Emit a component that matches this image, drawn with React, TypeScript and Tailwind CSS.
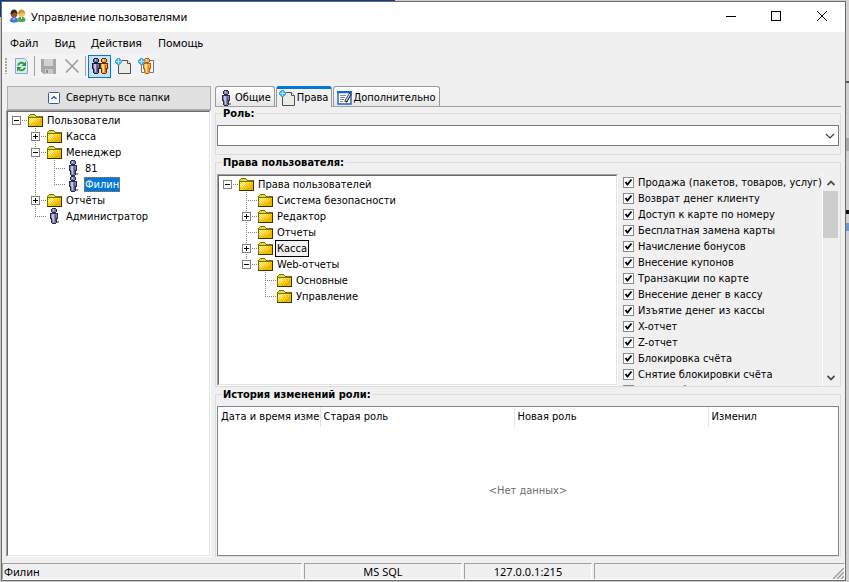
import type { ReactNode } from "react";

type NodeKind = "folder" | "user";

interface TreeItem {
  label: string;
  kind: NodeKind;
  toggle?: "plus" | "minus";
  selected?: "active" | "inactive";
  children?: TreeItem[];
}

const userTree: TreeItem[] = [
  {
    label: "Пользователи",
    kind: "folder",
    toggle: "minus",
    children: [
      { label: "Касса", kind: "folder", toggle: "plus" },
      {
        label: "Менеджер",
        kind: "folder",
        toggle: "minus",
        children: [
          { label: "81", kind: "user" },
          { label: "Филин", kind: "user", selected: "active" },
        ],
      },
      { label: "Отчёты", kind: "folder", toggle: "plus" },
      { label: "Администратор", kind: "user" },
    ],
  },
];

const rightsTree: TreeItem[] = [
  {
    label: "Права пользователей",
    kind: "folder",
    toggle: "minus",
    children: [
      { label: "Система безопасности", kind: "folder" },
      { label: "Редактор", kind: "folder", toggle: "plus" },
      { label: "Отчеты", kind: "folder" },
      { label: "Касса", kind: "folder", toggle: "plus", selected: "inactive" },
      {
        label: "Web-отчеты",
        kind: "folder",
        toggle: "minus",
        children: [
          { label: "Основные", kind: "folder" },
          { label: "Управление", kind: "folder" },
        ],
      },
    ],
  },
];

const permissions = [
  "Продажа (пакетов, товаров, услуг)",
  "Возврат денег клиенту",
  "Доступ к карте по номеру",
  "Бесплатная замена карты",
  "Начисление бонусов",
  "Внесение купонов",
  "Транзакции по карте",
  "Внесение денег в кассу",
  "Изъятие денег из кассы",
  "X-отчет",
  "Z-отчет",
  "Блокировка счёта",
  "Снятие блокировки счёта",
  "Отмена блокировки",
];

function FolderIcon() {
  return (
    <svg className="h-4 w-4 shrink-0" viewBox="0 0 16 16" shapeRendering="crispEdges" aria-hidden="true">
      <path d="M0 4h1V3h1V2h5v1h1v1h7v11H0z" fill="#7a7000" />
      <path d="M2 3h5v1h1v1H1V4h1z" fill="#e8d838" />
      <path d="M1 6h13v8H1z" fill="#eeb400" />
      <path d="M1 6h10v1h-1v1H9v1H8v1H6v1H4v1H1z" fill="#fcd428" />
      <g stroke="#ffdc3c" strokeDasharray="1 1">
        <path d="M11 6.500h3M11 7.500h2M9 8.500h4M8 9.500h4M7 10.500h4M5 11.500h4M2 12.500h5M1 13.500h3" />
      </g>
      <g stroke="#fff6a0" strokeDasharray="1 1">
        <path d="M1 6.500h9M2 7.500h6M1 8.500h5M2 9.500h3M1 10.500h3" />
      </g>
      <path d="M0 14.500h15M14.500 5v10" stroke="#3a3200" />
    </svg>
  );
}

function PersonShape({ x, body, light, dark }: { x: number; body: string; light: string; dark: string }) {
  return (
    <g transform={`translate(${x} 0)`}>
      <path d="M3 0h4v1h1v3h-1v1h2v6H8v4H7v1H3v-1H2v-4H1V5h2V4H2V1h1z" fill={dark} />
      <path d="M3 1h4v3H3zM2 6h6v4H7v5H3v-5H2z" fill={body} />
      <path d="M4 1h1v2H4zM3 6h2v8H4v-3H3z" fill={light} />
      <path d="M6 7h1v7H6z" fill={dark} opacity=".5" />
    </g>
  );
}

function UserIcon() {
  return (
    <svg className="h-4 w-4 shrink-0" viewBox="0 0 16 16" shapeRendering="crispEdges" aria-hidden="true">
      <path d="M10 13h2v2h-2z" fill="#9a9a9a" />
      <PersonShape x={2} body="#8080b4" light="#c4c4e0" dark="#2a2a44" />
    </svg>
  );
}

function UsersPairIcon() {
  return (
    <svg className="h-4 w-4" viewBox="0 0 16 16" shapeRendering="crispEdges" aria-hidden="true">
      <PersonShape x={-1} body="#7474a8" light="#c4c4e0" dark="#1c1c30" />
      <PersonShape x={7} body="#ff9d1c" light="#ffe08a" dark="#6a2c00" />
    </svg>
  );
}

function PlusDiamond() {
  return (
    <g shapeRendering="crispEdges">
      <path d="M2 0h3v1h1v1h1v3H6v1H5v1H2V6H1V5H0V2h1V1h1z" fill="#4cacd8" />
      <path d="M3 1h1v2h2v1H4v2H3V4H1V3h2z" fill="#a8e4fa" />
    </g>
  );
}

function NewPageIcon() {
  return (
    <svg className="h-4 w-4 shrink-0" viewBox="0 0 16 16" aria-hidden="true">
      <path d="M3.500 2.500h9l3 3v10h-12z" fill="#ecece6" stroke="#505050" />
      <path d="M12.500 2.500v3h3" fill="#fff" stroke="#505050" />
      <PlusDiamond />
    </svg>
  );
}

function NewUserIcon() {
  return (
    <svg className="h-4 w-4" viewBox="0 0 16 16" aria-hidden="true">
      <path d="M3.500 2.500h12v12h-12z" fill="#f4f4f4" stroke="#777" />
      <PersonShape x={4} body="#ffac3c" light="#ffe3a0" dark="#b8601c" />
      <PlusDiamond />
    </svg>
  );
}

function RefreshIcon() {
  return (
    <svg className="h-4 w-4" viewBox="0 0 16 16" aria-hidden="true">
      <path d="M1.500 .5h9l3 3v12h-12z" fill="#dbe9fa" stroke="#8aa8d0" />
      <path d="M4 7.500C5 4.500 8 4 10 5.500" fill="none" stroke="#36a336" strokeWidth="2" />
      <path d="M12 3.500v4.500H7.500z" fill="#2b982b" />
      <path d="M11 9.500c-1 3-4 3.500-6 2" fill="none" stroke="#36a336" strokeWidth="2" />
      <path d="M3 13.500V9h4.500z" fill="#2b982b" />
    </svg>
  );
}

function SaveIcon() {
  return (
    <svg className="h-4 w-4" viewBox="0 0 16 16" shapeRendering="crispEdges" aria-hidden="true">
      <path d="M0 1h15v15H2l-2-2z" fill="#a8a8a8" />
      <path d="M3 1h9v7H3z" fill="#d2d2d2" />
      <path d="M4 11h8v5H4z" fill="#c9c9c9" />
      <path d="M5 12h2v3H5z" fill="#8d8d8d" />
    </svg>
  );
}

function DeleteIcon() {
  return (
    <svg className="h-4 w-4" viewBox="0 0 16 16" aria-hidden="true">
      <path d="M1.500 1.500l13 13M14 2L2 14.500" stroke="#9c9c9c" strokeWidth="1.600" />
    </svg>
  );
}

function NotesIcon() {
  return (
    <svg className="h-4 w-4 shrink-0" viewBox="0 0 16 16" aria-hidden="true">
      <path d="M1 2.500h13v11.500H1z" fill="#fff" stroke="#1464c8" strokeWidth="1.400" />
      <path d="M0 1h15v2H0z" fill="#1464c8" />
      <path d="M3 5.500h6M3 7.500h5M3 9.500h4M3 11.500h3" stroke="#888" />
      <path d="M13.500 3.500L8.500 12" stroke="#222" strokeWidth="3" />
      <path d="M13 4L9 11" stroke="#d8d8d8" strokeWidth="1.400" />
    </svg>
  );
}

function AppIcon() {
  return (
    <svg className="h-4 w-4" viewBox="0 0 16 16" aria-hidden="true">
      <path d="M0 12c0-3 2-4 4-4s4 1 4 4c0 2-8 2-8 0z" fill="#3f74d8" />
      <path d="M7.500 11.500c0-3 2-4 4-4s4 1 4 4c0 2-8 2-8 0z" fill="#4fa84a" />
      <circle cx="4" cy="5" r="3.400" fill="#9a5230" />
      <path d="M.5 5c0-6 7-6 7 0-2-2-4-2-5 0z" fill="#33241e" />
      <circle cx="11.500" cy="4.500" r="3.400" fill="#f0c060" />
      <path d="M8 5c0-6 7-6 7 0-2-2-4-2-5 0z" fill="#cf922c" />
      <path d="M4 9v2M11.500 8v2" stroke="#fff" />
    </svg>
  );
}

function TreeCell({ shape, toggle }: { shape: "blank" | "pass" | "tee" | "end" | "root"; toggle?: "plus" | "minus" }) {
  return (
    <svg className="h-4 w-[19px] shrink-0" viewBox="0 0 19 16" shapeRendering="crispEdges" aria-hidden="true">
      <g stroke="#808080" strokeDasharray="1 1" fill="none">
        {(shape === "pass" || shape === "tee") && <path d="M8.500 0v16" />}
        {shape === "end" && <path d="M8.500 0v9" />}
        {shape !== "blank" && shape !== "pass" && <path d="M8 8.500h11" />}
      </g>
      {toggle && (
        <g>
          <rect x="4.500" y="4.500" width="8" height="8" fill="#fff" stroke="#808080" />
          <path d={toggle === "plus" ? "M6 8.500h5M8.500 6v5" : "M6 8.500h5"} stroke="#000" />
        </g>
      )}
    </svg>
  );
}

function TreeBranch({ items, guides = [] }: { items: TreeItem[]; guides?: boolean[] }) {
  return (
    <ul role={guides.length ? "group" : "tree"}>
      {items.map((item, i) => {
        const last = i === items.length - 1;
        const root = guides.length === 0;
        const mark =
          item.selected === "active"
            ? "bg-[#0078d7] text-white outline-1 outline-dotted outline-[#d0701c] -outline-offset-1"
            : item.selected === "inactive"
              ? "bg-[#f0f0f0] outline-1 outline-black"
              : "";
        return (
          <li key={item.label} role="treeitem" aria-selected={!!item.selected} aria-expanded={item.children ? true : undefined}>
            <div className="flex h-4 items-center">
              {guides.map((g, n) => (
                <TreeCell key={n} shape={g ? "pass" : "blank"} />
              ))}
              <TreeCell shape={root ? "root" : last ? "end" : "tee"} toggle={item.toggle} />
              <span className="flex items-center gap-0.5 pl-px">
                {item.kind === "folder" ? <FolderIcon /> : <UserIcon />}
                <span className={`px-px leading-[15px] whitespace-nowrap ${mark}`}>{item.label}</span>
              </span>
            </div>
            {item.children && <TreeBranch items={item.children} guides={[...guides, root ? false : !last]} />}
          </li>
        );
      })}
    </ul>
  );
}

function Sunken({ children, className }: { children: ReactNode; className: string }) {
  return (
    <div className={`border border-t-[#a0a0a0] border-r-white border-b-white border-l-[#a0a0a0] ${className}`}>
      <div className="h-full overflow-hidden border border-t-[#696969] border-r-[#e3e3e3] border-b-[#e3e3e3] border-l-[#696969] bg-white">
        {children}
      </div>
    </div>
  );
}

function Group({ title, className = "", children }: { title: string; className?: string; children: ReactNode }) {
  return (
    <fieldset className={`flex min-w-0 flex-col border border-[#dcdcdc] px-px pt-[5px] ${className}`}>
      <legend className="ml-[5px] px-px pt-px leading-3 font-bold">{title}</legend>
      {children}
    </fieldset>
  );
}

function ToolButton({ label, children, active, disabled }: { label: string; children: ReactNode; active?: boolean; disabled?: boolean }) {
  return (
    <button
      type="button"
      aria-label={label}
      disabled={disabled}
      className={`flex h-[23px] w-[23px] items-center justify-center border ${active ? "border-[#0078d7] bg-[#c9e0f5]" : "border-transparent"}`}
    >
      {children}
    </button>
  );
}

function Toolbar() {
  return (
    <div role="toolbar" className="flex h-6 w-[156px] items-center bg-[#f3f3f3] pl-[3px]">
      <div className="mr-[3px] h-4 w-0.5 bg-[repeating-linear-gradient(180deg,#a8a8a8_0_2px,transparent_2px_3px)]" />
      <ToolButton label="Обновить">
        <RefreshIcon />
      </ToolButton>
      <div className="mx-px h-5 w-px bg-[#a0a0a0]" />
      <div className="flex pl-px">
        <ToolButton label="Сохранить" disabled>
          <SaveIcon />
        </ToolButton>
        <ToolButton label="Удалить" disabled>
          <DeleteIcon />
        </ToolButton>
      </div>
      <div className="mx-0.5 h-5 w-px bg-[#a0a0a0]" />
      <ToolButton label="Пользователи" active>
        <UsersPairIcon />
      </ToolButton>
      <ToolButton label="Новая папка">
        <NewPageIcon />
      </ToolButton>
      <ToolButton label="Новый пользователь">
        <NewUserIcon />
      </ToolButton>
    </div>
  );
}

function TabButton({ label, icon, active }: { label: string; icon: ReactNode; active?: boolean }) {
  return (
    <button
      type="button"
      role="tab"
      aria-selected={!!active}
      className={`flex items-center rounded-t-[3px] border border-b-0 border-[#989898] bg-[#f0f0f0] pr-[3px] whitespace-nowrap ${
        active ? "-mb-px h-[21px] gap-0.5 border-t-[3px] border-t-[#0078d7] pl-0.5" : "h-5 bg-linear-to-b from-white to-[#e6e6e6] pt-0.5 pl-[3px]"
      }`}
    >
      {icon}
      <span>{label}</span>
    </button>
  );
}

function ScrollColumn() {
  return (
    <div className="flex w-4 shrink-0 flex-col border-l border-white bg-[#f0f0f0]">
      <button type="button" aria-label="Вверх" className="flex h-[17px] items-center justify-center">
        <svg className="h-2 w-2" viewBox="0 0 8 8" aria-hidden="true">
          <path d="M.5 6L4 2.500 7.500 6" fill="none" stroke="#505050" strokeWidth="1.800" />
        </svg>
      </button>
      <div className="flex-1">
        <div className="h-[47px] bg-[#cdcdcd]" />
      </div>
      <button type="button" aria-label="Вниз" className="flex h-[17px] items-center justify-center">
        <svg className="h-2 w-2" viewBox="0 0 8 8" aria-hidden="true">
          <path d="M.5 2L4 5.500 7.500 2" fill="none" stroke="#505050" strokeWidth="1.800" />
        </svg>
      </button>
    </div>
  );
}

function PermissionList() {
  return (
    <div className="flex w-[216px] shrink-0">
      <ul className="min-w-0 flex-1 overflow-hidden">
        {permissions.map((name) => (
          <li key={name} className="h-4">
            <label className="flex h-4 items-center gap-1 pl-px whitespace-nowrap">
              <span className="grid">
                <input
                  type="checkbox"
                  defaultChecked
                  className="peer col-start-1 row-start-1 h-[11px] w-[11px] appearance-none border border-[#8c8c8c] bg-white"
                />
                <svg className="pointer-events-none invisible col-start-1 row-start-1 h-[11px] w-[11px] peer-checked:visible" viewBox="0 0 11 11" aria-hidden="true">
                  <path d="M2.500 5l2 2.500 4-5" fill="none" stroke="#000" strokeWidth="2" />
                </svg>
              </span>
              <span className="pt-0.5">{name}</span>
            </label>
          </li>
        ))}
      </ul>
      <ScrollColumn />
    </div>
  );
}

function HistoryTable() {
  return (
    <div className="min-h-0 flex-1 border border-[#828790] bg-white">
      <table className="h-full w-full table-fixed border-collapse text-left">
        <thead>
          <tr className="h-5">
            <th className="w-[102px] border-r border-[#e5e5e5] pl-[3px] font-normal">
              <div className="overflow-hidden whitespace-nowrap">Дата и время измен</div>
            </th>
            <th className="w-[194px] border-r border-[#e5e5e5] pl-[3px] font-normal">Старая роль</th>
            <th className="w-[194px] border-r border-[#e5e5e5] pl-[3px] font-normal">Новая роль</th>
            <th className="pl-[3px] font-normal">Изменил</th>
          </tr>
        </thead>
        <tbody>
          <tr>
            <td colSpan={4} className="text-center text-[#6d6d6d]">
              &lt;Нет данных&gt;
            </td>
          </tr>
        </tbody>
      </table>
    </div>
  );
}

function TitleBar() {
  return (
    <header className="flex h-[30px] shrink-0 items-center bg-white pl-2 font-['Noto_Sans',sans-serif]">
      <AppIcon />
      <h1 className="ml-[5px] flex-1">Управление пользователями</h1>
      <div className="flex">
        <button type="button" aria-label="Свернуть" className="flex h-[30px] w-[45px] items-center justify-center">
          <svg className="h-3 w-3" viewBox="0 0 12 12" shapeRendering="crispEdges" aria-hidden="true">
            <path d="M1 5.500h10" stroke="#000" />
          </svg>
        </button>
        <button type="button" aria-label="Развернуть" className="flex h-[30px] w-[45px] items-center justify-center">
          <svg className="h-3 w-3" viewBox="0 0 12 12" shapeRendering="crispEdges" aria-hidden="true">
            <path d="M1.500 .5h9v9h-9z" fill="none" stroke="#000" />
          </svg>
        </button>
        <button type="button" aria-label="Закрыть" className="flex h-[30px] w-[47px] items-center justify-center">
          <svg className="h-3 w-3" viewBox="0 0 12 12" aria-hidden="true">
            <path d="M1 0l10 10M11 0L1 10" stroke="#000" />
          </svg>
        </button>
      </div>
    </header>
  );
}

function StatusBar() {
  const pane = "h-4 border-t border-r border-l border-t-[#a0a0a0] border-l-[#a0a0a0] border-r-white";
  return (
    <footer className="flex shrink-0 gap-0.5 border-b border-white font-['Noto_Sans',sans-serif] leading-4">
      <div className={`${pane} w-[300px] pl-px`}>Филин</div>
      <div className={`${pane} w-[158px] text-center`}>MS SQL</div>
      <div className={`${pane} w-[128px] text-center`}>127.0.0.1:215</div>
      <div className={`${pane} flex flex-1 items-end justify-end`}>
        <svg className="h-3 w-3" viewBox="0 0 12 12" aria-hidden="true">
          <path d="M1 12L12 1M5 12l7-7M9 12l3-3" stroke="#a0a0a0" strokeWidth="1.500" />
        </svg>
      </div>
    </footer>
  );
}

export default function App() {
  return (
    <div className="flex h-screen flex-col bg-[linear-gradient(90deg,#0a3a94_0_395px,#cfcfcf_395px)] bg-[length:100%_1px] bg-no-repeat font-['DejaVu_Sans_Condensed','DejaVu_Sans',sans-serif] text-[11px] leading-4 text-black">
      <div className="mt-px flex min-h-0 flex-1 bg-[linear-gradient(180deg,#0a3a94_0_16px,#c8c8c8_16px)] pb-px pl-px">
        <div className="flex min-w-0 flex-1 flex-col border border-[#6b6b6b] bg-[#f0f0f0]">
          <TitleBar />
          <nav className="flex h-[22px] shrink-0 items-center gap-4 pl-2 font-['Noto_Sans',sans-serif]">
            {["Файл", "Вид", "Действия", "Помощь"].map((m) => (
              <button key={m} type="button">
                {m}
              </button>
            ))}
          </nav>
          <Toolbar />

          <main className="mt-2 flex min-h-0 flex-1 gap-1 pr-1 pl-1">
            <aside className="flex w-[205px] shrink-0 flex-col">
              <button type="button" className="ml-px flex h-6 shrink-0 items-center justify-center gap-1.5 border border-[#adadad] bg-[#e1e1e1]">
                <svg className="h-3 w-3" viewBox="0 0 12 12" aria-hidden="true">
                  <rect x=".5" y=".5" width="11" height="11" rx="1" fill="#fff" stroke="#3858b0" />
                  <path d="M3.500 7L6 4.500 8.500 7" fill="none" stroke="#24409c" strokeWidth="1.200" />
                </svg>
                Свернуть все папки
              </button>
              <Sunken className="min-h-0 flex-1">
                <TreeBranch items={userTree} />
              </Sunken>
            </aside>

            <section className="flex min-w-0 flex-1 flex-col">
              <div role="tablist" className="flex h-[21px] shrink-0 items-end gap-px border-b border-[#a0a0a0]">
                <TabButton label="Общие" icon={<UserIcon />} />
                <TabButton label="Права" icon={<NewPageIcon />} active />
                <TabButton label="Дополнительно" icon={<NotesIcon />} />
              </div>

              <Group title="Роль:" className="shrink-0 pb-2">
                <div className="grid items-center">
                  <select aria-label="Роль" className="col-start-1 row-start-1 h-[21px] w-full appearance-none border border-[#7a7a7a] bg-white px-1">
                    <option value=""></option>
                  </select>
                  <svg className="pointer-events-none col-start-1 row-start-1 mr-1 h-2 w-2.5 justify-self-end" viewBox="0 0 10 8" aria-hidden="true">
                    <path d="M1 2l4 4 4-4" fill="none" stroke="#404040" strokeWidth="1.200" />
                  </svg>
                </div>
              </Group>

              <Group title="Права пользователя:" className="mt-px min-h-0 flex-[209]">
                <div className="flex min-h-0 flex-1 gap-1 pr-px">
                  <Sunken className="min-w-0 flex-1">
                    <TreeBranch items={rightsTree} />
                  </Sunken>
                  <PermissionList />
                </div>
              </Group>

              <Group title="История изменений роли:" className="mt-px min-h-0 flex-[151]">
                <HistoryTable />
              </Group>
            </section>
          </main>

          <div className="h-1.5 shrink-0" />
          <StatusBar />
        </div>
        <div className="w-[3px] shrink-0 bg-[linear-gradient(180deg,#d4d0d0_0_80px,#555_80px_82px,#cfcfcf_82px_137px,#a8a8a8_137px_150px,#cfcfcf_150px_209px,#111_209px_213px,#cfcfcf_213px_222px,#6d9bd0_222px_230px,#cfcfcf_230px)]" />
      </div>
    </div>
  );
}
